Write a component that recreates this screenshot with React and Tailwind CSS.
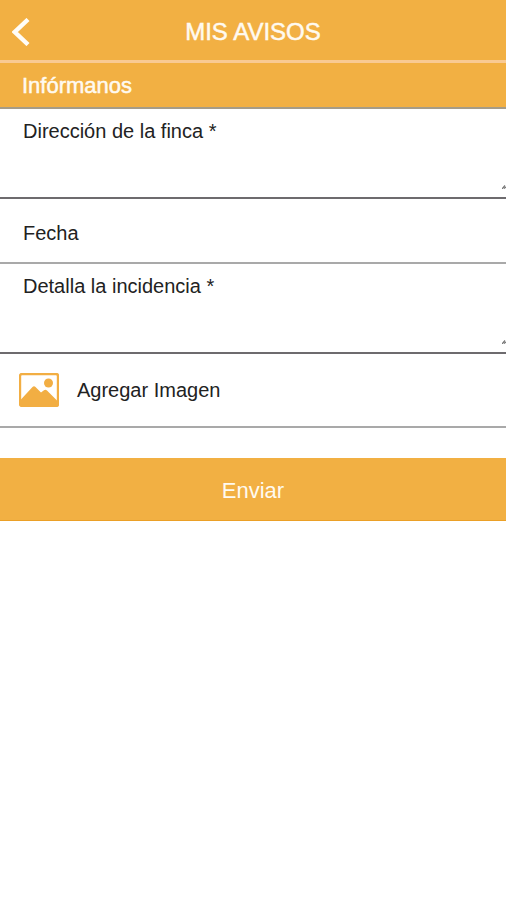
import React from "react";

function BackIcon() {
  return (
    <svg viewBox="0 0 18 28" className="h-7 w-[18px]" fill="none" stroke="#fffdf8" strokeWidth="4.4" aria-hidden="true">
      <path d="M16 1.500 2.800 14 16 26.500" />
    </svg>
  );
}

function PictureIcon() {
  return (
    <svg viewBox="0 0 40 34" className="h-[34px] w-10 shrink-0" aria-hidden="true">
      <rect x="1" y="1" width="38" height="32" rx="2" fill="none" stroke="#f2ae43" strokeWidth="2.4" />
      <circle cx="29.5" cy="10" r="4.5" fill="#f2ae43" />
      <path d="M1 27.500 13.500 14q1.500-1.500 3 0L22 19.500l3-2.200q1.500-1 3 .3L39 28.500V33H1z" fill="#f2ae43" />
    </svg>
  );
}

function ResizeGrip() {
  return (
    <svg viewBox="0 0 4 4" className="pointer-events-none absolute right-0 bottom-2 size-1" aria-hidden="true">
      <path d="M0 4 3 0.500M2 3.500 4 2" stroke="#777" strokeWidth="1.2" fill="none" />
    </svg>
  );
}

function TextAreaField({ id, label }) {
  return (
    <div className="relative flex h-[90px] flex-col border-b-2 border-[#6d6b6e] pt-2.5">
      <label htmlFor={id} className="px-[23px] text-xl leading-6">
        {label}
      </label>
      <textarea id={id} className="w-full flex-1 resize-none bg-transparent px-[23px] text-xl leading-6 outline-none" />
      <ResizeGrip />
    </div>
  );
}

export default function App() {
  return (
    <div className="min-h-screen bg-white font-['Liberation_Sans',Arial,sans-serif] text-[#222]">
      <header className="grid h-[63px] grid-cols-[64px_1fr_64px] items-center border-b-3 border-[#f9ca93] bg-[#f2b043]">
        <button type="button" aria-label="Volver" className="flex h-full items-center pt-1 pl-3">
          <BackIcon />
        </button>
        <h1 className="pt-1 text-center text-2xl leading-7 text-[#fffaf0] [-webkit-text-stroke:0.5px]">MIS AVISOS</h1>
      </header>
      <main>
        <h2 className="flex h-[46px] items-center border-b-2 border-[#a69c87] bg-[#f2b043] px-[22px] pt-0.5 text-[22px] leading-6 text-[#fffaf0] [-webkit-text-stroke:0.5px]">
          Infórmanos
        </h2>
        <form onSubmit={(e) => e.preventDefault()}>
          <TextAreaField id="direccion" label="Dirección de la finca *" />
          <div className="flex h-[65px] items-center border-b-2 border-[#a9a9a9] pt-1 pl-[23px]">
            <label htmlFor="fecha" className="text-xl leading-6">
              Fecha
            </label>
            <input id="fecha" type="text" className="h-full min-w-0 flex-1 bg-transparent px-4 text-xl outline-none" />
          </div>
          <TextAreaField id="detalle" label="Detalla la incidencia *" />
          <button
            type="button"
            className="flex h-[74px] w-full items-center gap-[18px] border-b-2 border-[#a9a9a9] pl-[19px] text-left text-xl leading-6"
          >
            <PictureIcon />
            Agregar Imagen
          </button>
          <button
            type="submit"
            className="mt-[30px] flex h-[63px] w-full items-center justify-center border-b border-[#eba027] bg-[#f2b043] pt-1 text-[22px] leading-6 text-[#fffaf0]"
          >
            Enviar
          </button>
        </form>
      </main>
    </div>
  );
}
